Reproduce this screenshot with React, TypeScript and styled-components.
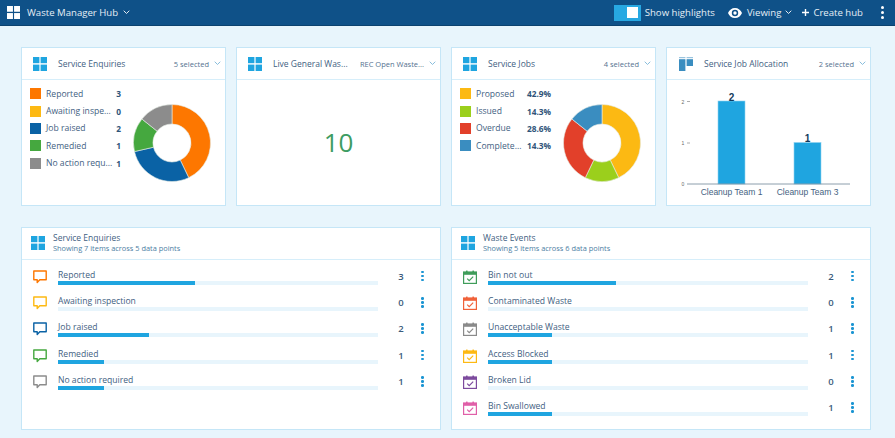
import { FC } from 'react'
import styled, { createGlobalStyle } from 'styled-components'

const GlobalStyle = createGlobalStyle`
  html, body {
    margin: 0;
    padding: 0;
    background: #e8f5fc;
    font-family: 'Open Sans', 'Noto Sans', sans-serif;
    color: #3f6182;
  }
  * { box-sizing: border-box; }
`

const Page = styled.div`
  width: 895px;
  height: 438px;
  overflow: hidden;
`

const TopBar = styled.header`
  height: 26px;
  background: #0f5188;
  border-bottom: 1px solid #0b426f;
  display: flex;
  align-items: center;
  justify-content: space-between;
  padding: 0 11px 0 7px;
  color: #e6eff6;
  font-size: 9.6px;
`

const BarGroup = styled.div`
  display: flex;
  align-items: center;
`

const HubName = styled.span`
  margin: 0 5px 0 7px;
`

const Toggle = styled.div`
  width: 27px;
  height: 16px;
  background: #27a8e2;
  display: flex;
  align-items: center;
  justify-content: flex-end;
  padding-right: 3px;
  margin-right: 4px;
`

const ToggleKnob = styled.div`
  width: 11px;
  height: 11px;
  background: #fff;
`

const BarItem = styled.span<{ $gap?: number }>`
  display: flex;
  align-items: center;
  margin-left: ${(props) => props.$gap ?? 0}px;
`

const BarKebab = styled.div`
  display: flex;
  flex-direction: column;
  gap: 2px;
  margin-left: 18px;

  i {
    width: 3px;
    height: 3px;
    border-radius: 50%;
    background: #fff;
  }
`

const Content = styled.main`
  padding: 21px 24px 0 21px;
  display: flex;
  flex-direction: column;
  gap: 21px;
`

const TopRow = styled.div`
  display: grid;
  grid-template-columns: repeat(4, 205px);
  gap: 10px;
`

const BottomRow = styled.div`
  display: grid;
  grid-template-columns: repeat(2, 420px);
  gap: 10px;
`

const Card = styled.section<{ $height: number }>`
  height: ${(props) => props.$height}px;
  background: #fff;
  border: 1px solid #c5e6f7;
  display: flex;
  flex-direction: column;
`

const CardHeader = styled.div`
  height: 32px;
  flex: none;
  border-bottom: 1px solid #d6eefa;
  display: flex;
  align-items: center;
  padding: 0 4px 0 11px;
`

const CardTitle = styled.div`
  margin-left: 11px;
  flex: 1;
  min-width: 0;
  font-size: 8.5px;
  white-space: nowrap;
`

const Selector = styled.div`
  display: flex;
  align-items: center;
  gap: 5px;
  font-size: 7.5px;
  color: #55728f;
  white-space: nowrap;
`

const CardBody = styled.div`
  flex: 1;
  display: flex;
`

const Legend = styled.div`
  width: 99px;
  padding: 5px 0 0 8px;
  display: flex;
  flex-direction: column;
  flex: none;
`

const LegendRow = styled.div`
  height: 17.4px;
  display: flex;
  align-items: center;
  font-size: 8.6px;
`

const Swatch = styled.div<{ $color: string }>`
  width: 11px;
  height: 11px;
  flex: none;
  background: ${(props) => props.$color};
  margin-right: 5px;
`

const LegendLabel = styled.span`
  flex: 1;
  min-width: 0;
  white-space: nowrap;
`

const LegendValue = styled.span`
  font-weight: 700;
  color: #2f5479;
  text-align: right;
  font-size: 8.3px;
`

const DonutWrap = styled.div`
  flex: 1;
  display: flex;
  padding: 23.5px 0 0 12px;
`

const BigNumber = styled.div`
  flex: 1;
  display: flex;
  align-items: center;
  justify-content: center;
  padding-bottom: 2px;
  font-size: 26px;
  font-weight: 500;
  color: #3d9c62;
`

const ListHeader = styled(CardHeader)`
  padding-left: 9px;
  padding-bottom: 2px;
`

const ListTitles = styled.div`
  margin-left: 8px;
  display: flex;
  flex-direction: column;
`

const ListTitle = styled.div`
  font-size: 8.5px;
  line-height: 11px;
`

const ListSubtitle = styled.div`
  font-size: 7.4px;
  line-height: 10px;
  color: #4d7ea3;
`

const ListBody = styled.div`
  padding: 3px 0 0 11px;
  display: flex;
  flex-direction: column;
`

const ListRow = styled.div`
  height: 26.3px;
  display: flex;
  align-items: center;
`

const RowIcon = styled.div`
  width: 14px;
  height: 14px;
  flex: none;
  margin: 0 11px 5px 0;
`

const RowMain = styled.div`
  width: 320px;
  flex: none;
  display: flex;
  flex-direction: column;
  margin-top: 1px;
`

const RowLabel = styled.div`
  font-size: 8.6px;
  line-height: 12px;
`

const Track = styled.div`
  height: 4px;
  background: #e8f5fc;
`

const Fill = styled.div`
  height: 100%;
  background: #1fa5e0;
`

const RowValue = styled.div`
  width: 46px;
  text-align: center;
  font-size: 9.5px;
  font-weight: 600;
  color: #3a5b7c;
`

const RowKebab = styled.div`
  display: flex;
  flex-direction: column;
  gap: 1.5px;
  margin-left: -3px;

  i {
    width: 2.5px;
    height: 2.5px;
    border-radius: 50%;
    background: #1b95d3;
  }
`

const BoardIconBox = styled.span`
  display: flex;
  flex: none;
  margin-left: 1px;
`

const GridIcon: FC<{ color?: string; size?: number }> = ({ color = '#1fa5e0', size = 14 }) => (
  <svg width={size} height={size} viewBox='0 0 14 14' style={{ flex: 'none' }}>
    <rect x='0' y='0' width='6.4' height='6.2' fill={color} />
    <rect x='7.6' y='0' width='6.4' height='6.2' fill={color} />
    <rect x='0' y='7.6' width='6.4' height='6.4' fill={color} />
    <rect x='7.6' y='7.6' width='6.4' height='6.4' fill={color} />
  </svg>
)

const BoardIcon: FC = () => (
  <BoardIconBox>
    <svg width={14} height={14} viewBox='0 0 14 14'>
      <rect x='0' y='0' width='6.4' height='1.2' fill='#9ac4de' />
      <rect x='7.6' y='0' width='6.4' height='1.2' fill='#9ac4de' />
      <rect x='0' y='2.2' width='6.4' height='11.8' fill='#3a8dc0' />
      <rect x='7.6' y='2.2' width='6.4' height='6.8' fill='#3a8dc0' />
    </svg>
  </BoardIconBox>
)

const Chevron: FC<{ color?: string; size?: number }> = ({ color = '#7cb6d8', size = 7 }) => (
  <svg width={size} height={size * 0.6} viewBox='0 0 10 6' style={{ flex: 'none' }}>
    <path d='M1 1 L5 5 L9 1' fill='none' stroke={color} strokeWidth='1.3' />
  </svg>
)

const EyeIcon: FC = () => (
  <svg width={14} height={10} viewBox='0 0 14 10' style={{ flex: 'none' }}>
    <path
      fillRule='evenodd'
      d='M7 0C3.8 0 1.2 2 0 5c1.2 3 3.8 5 7 5s5.8-2 7-5C12.8 2 10.2 0 7 0ZM7 1.8a3.2 3.2 0 1 1 0 6.4 3.2 3.2 0 0 1 0-6.4Z'
      fill='#fff'
    />
    <circle cx='7' cy='5' r='1.7' fill='#fff' />
  </svg>
)

const PlusIcon: FC = () => (
  <svg width={7} height={7} viewBox='0 0 7 7' style={{ flex: 'none' }}>
    <path d='M3.5 0V7M0 3.5H7' stroke='#fff' strokeWidth='1.4' />
  </svg>
)

const BubbleIcon: FC<{ color: string }> = ({ color }) => (
  <svg width={14} height={14} viewBox='0 0 14 14'>
    <path
      d='M0.8 1H13.2V9.8H6.8L4.2 12.6V9.8H0.8Z'
      fill='none'
      stroke={color}
      strokeWidth='1.4'
      strokeLinejoin='round'
    />
  </svg>
)

const CalendarIcon: FC<{ color: string }> = ({ color }) => (
  <svg width={14} height={14} viewBox='0 0 14 14'>
    <rect x='0.6' y='2' width='12.8' height='11.4' fill='none' stroke={color} strokeWidth='1.2' />
    <rect x='0.6' y='2' width='12.8' height='2.8' fill={color} />
    <rect x='3' y='0.6' width='1.6' height='2' fill={color} />
    <rect x='9.4' y='0.6' width='1.6' height='2' fill={color} />
    <path d='M4.2 8.6 L6.2 10.6 L10.2 6.6' fill='none' stroke={color} strokeWidth='1.2' />
  </svg>
)

const slicePath = (start: number, end: number, r: number, inner: number, c: number) => {
  const point = (radius: number, turn: number) => {
    const angle = turn * 2 * Math.PI - Math.PI / 2
    return `${(c + radius * Math.cos(angle)).toFixed(2)} ${(c + radius * Math.sin(angle)).toFixed(2)}`
  }
  const large = end - start > 0.5 ? 1 : 0
  return `M${point(r, start)} A${r} ${r} 0 ${large} 1 ${point(r, end)} L${point(inner, end)} A${inner} ${inner} 0 ${large} 0 ${point(inner, start)} Z`
}

const Donut: FC<{ slices: { color: string; value: number }[] }> = ({ slices }) => {
  const total = slices.reduce((sum, s) => sum + s.value, 0)
  let run = 0
  return (
    <svg width={78} height={78} viewBox='0 0 78 78'>
      {slices
        .filter((s) => s.value > 0)
        .map((s) => {
          const start = run / total
          run += s.value
          return (
            <path
              key={s.color}
              d={slicePath(start, run / total, 38.5, 19, 39)}
              fill={s.color}
              stroke='#e6ece6'
              strokeWidth='0.6'
            />
          )
        })}
    </svg>
  )
}

const AllocationChart: FC = () => (
  <svg width={203} height={125} viewBox='0 0 203 125'>
    <g fontFamily="'Liberation Sans', sans-serif">
      <text x='16' y='23.5' fontSize='5' fill='#666' textAnchor='middle'>2</text>
      <text x='16' y='65' fontSize='5' fill='#666' textAnchor='middle'>1</text>
      <text x='16' y='106' fontSize='5' fill='#666' textAnchor='middle'>0</text>
      <path d='M20 21.5H23M20 63H23' stroke='#888' strokeWidth='0.7' />
      <rect x='51' y='21' width='27' height='83' fill='#1fa5e0' stroke='#8fd2f0' strokeWidth='0.6' />
      <rect x='127' y='62.5' width='27' height='41.5' fill='#1fa5e0' stroke='#8fd2f0' strokeWidth='0.6' />
      <path d='M20 104H183' stroke='#6f8598' strokeWidth='0.8' />
      <text x='64.5' y='20.5' fontSize='10' fontWeight='700' fill='#123a5c' textAnchor='middle'>2</text>
      <text x='140.5' y='62' fontSize='10' fontWeight='700' fill='#123a5c' textAnchor='middle'>1</text>
      <text x='64.5' y='115' fontSize='8.5' fill='#44627f' textAnchor='middle'>Cleanup Team 1</text>
      <text x='140.5' y='115' fontSize='8.5' fill='#44627f' textAnchor='middle'>Cleanup Team 3</text>
    </g>
  </svg>
)

const enquiries = [
  { label: 'Reported', short: 'Reported', value: 3, color: '#fd7700' },
  { label: 'Awaiting inspection', short: 'Awaiting inspe...', value: 0, color: '#fdb913' },
  { label: 'Job raised', short: 'Job raised', value: 2, color: '#0a62a5' },
  { label: 'Remedied', short: 'Remedied', value: 1, color: '#45a83f' },
  { label: 'No action required', short: 'No action requ...', value: 1, color: '#8c8c8c' },
]

const jobs = [
  { short: 'Proposed', display: '42.9%', value: 3, color: '#fcb913' },
  { short: 'Issued', display: '14.3%', value: 1, color: '#9bcf1c' },
  { short: 'Overdue', display: '28.6%', value: 2, color: '#e2402a' },
  { short: 'Complete...', display: '14.3%', value: 1, color: '#3a8dc0' },
]

const events = [
  { label: 'Bin not out', value: 2, color: '#3f9d5a' },
  { label: 'Contaminated Waste', value: 0, color: '#f0623a' },
  { label: 'Unacceptable Waste', value: 1, color: '#8a8a8a' },
  { label: 'Access Blocked', value: 1, color: '#fdb913' },
  { label: 'Broken Lid', value: 0, color: '#7d4b9e' },
  { label: 'Bin Swallowed', value: 1, color: '#e05fa8' },
]

const Kebab: FC = () => (
  <RowKebab>
    <i />
    <i />
    <i />
  </RowKebab>
)

const App: FC = () => (
  <Page>
    <GlobalStyle />
    <TopBar>
      <BarGroup>
        <GridIcon color='#fff' size={13} />
        <HubName>Waste Manager Hub</HubName>
        <Chevron color='#fff' />
      </BarGroup>
      <BarGroup>
        <Toggle>
          <ToggleKnob />
        </Toggle>
        <BarItem>Show highlights</BarItem>
        <BarItem $gap={13}>
          <EyeIcon />
        </BarItem>
        <BarItem $gap={5}>Viewing</BarItem>
        <BarItem $gap={4}>
          <Chevron color='#fff' />
        </BarItem>
        <BarItem $gap={10}>
          <PlusIcon />
        </BarItem>
        <BarItem $gap={4}>Create hub</BarItem>
        <BarKebab>
          <i />
          <i />
          <i />
        </BarKebab>
      </BarGroup>
    </TopBar>
    <Content>
      <TopRow>
        <Card $height={159}>
          <CardHeader>
            <GridIcon />
            <CardTitle>Service Enquiries</CardTitle>
            <Selector>
              5 selected <Chevron />
            </Selector>
          </CardHeader>
          <CardBody>
            <Legend>
              {enquiries.map((row) => (
                <LegendRow key={row.label}>
                  <Swatch $color={row.color} />
                  <LegendLabel>{row.short}</LegendLabel>
                  <LegendValue>{row.value}</LegendValue>
                </LegendRow>
              ))}
            </Legend>
            <DonutWrap>
              <Donut slices={enquiries} />
            </DonutWrap>
          </CardBody>
        </Card>
        <Card $height={159}>
          <CardHeader>
            <GridIcon />
            <CardTitle>Live General Was...</CardTitle>
            <Selector>
              REC Open Waste... <Chevron />
            </Selector>
          </CardHeader>
          <BigNumber>10</BigNumber>
        </Card>
        <Card $height={159}>
          <CardHeader>
            <GridIcon />
            <CardTitle>Service Jobs</CardTitle>
            <Selector>
              4 selected <Chevron />
            </Selector>
          </CardHeader>
          <CardBody>
            <Legend>
              {jobs.map((row) => (
                <LegendRow key={row.short}>
                  <Swatch $color={row.color} />
                  <LegendLabel>{row.short}</LegendLabel>
                  <LegendValue>{row.display}</LegendValue>
                </LegendRow>
              ))}
            </Legend>
            <DonutWrap>
              <Donut slices={jobs} />
            </DonutWrap>
          </CardBody>
        </Card>
        <Card $height={159}>
          <CardHeader>
            <BoardIcon />
            <CardTitle>Service Job Allocation</CardTitle>
            <Selector>
              2 selected <Chevron />
            </Selector>
          </CardHeader>
          <AllocationChart />
        </Card>
      </TopRow>
      <BottomRow>
        <Card $height={203}>
          <ListHeader>
            <GridIcon />
            <ListTitles>
              <ListTitle>Service Enquiries</ListTitle>
              <ListSubtitle>Showing 7 items across 5 data points</ListSubtitle>
            </ListTitles>
          </ListHeader>
          <ListBody>
            {enquiries.map((row) => (
              <ListRow key={row.label}>
                <RowIcon>
                  <BubbleIcon color={row.color} />
                </RowIcon>
                <RowMain>
                  <RowLabel>{row.label}</RowLabel>
                  <Track>
                    <Fill style={{ width: `${(row.value / 7) * 100}%` }} />
                  </Track>
                </RowMain>
                <RowValue>{row.value}</RowValue>
                <Kebab />
              </ListRow>
            ))}
          </ListBody>
        </Card>
        <Card $height={203}>
          <ListHeader>
            <GridIcon />
            <ListTitles>
              <ListTitle>Waste Events</ListTitle>
              <ListSubtitle>Showing 5 items across 6 data points</ListSubtitle>
            </ListTitles>
          </ListHeader>
          <ListBody>
            {events.map((row) => (
              <ListRow key={row.label}>
                <RowIcon>
                  <CalendarIcon color={row.color} />
                </RowIcon>
                <RowMain>
                  <RowLabel>{row.label}</RowLabel>
                  <Track>
                    <Fill style={{ width: `${(row.value / 5) * 100}%` }} />
                  </Track>
                </RowMain>
                <RowValue>{row.value}</RowValue>
                <Kebab />
              </ListRow>
            ))}
          </ListBody>
        </Card>
      </BottomRow>
    </Content>
  </Page>
)

export default App
